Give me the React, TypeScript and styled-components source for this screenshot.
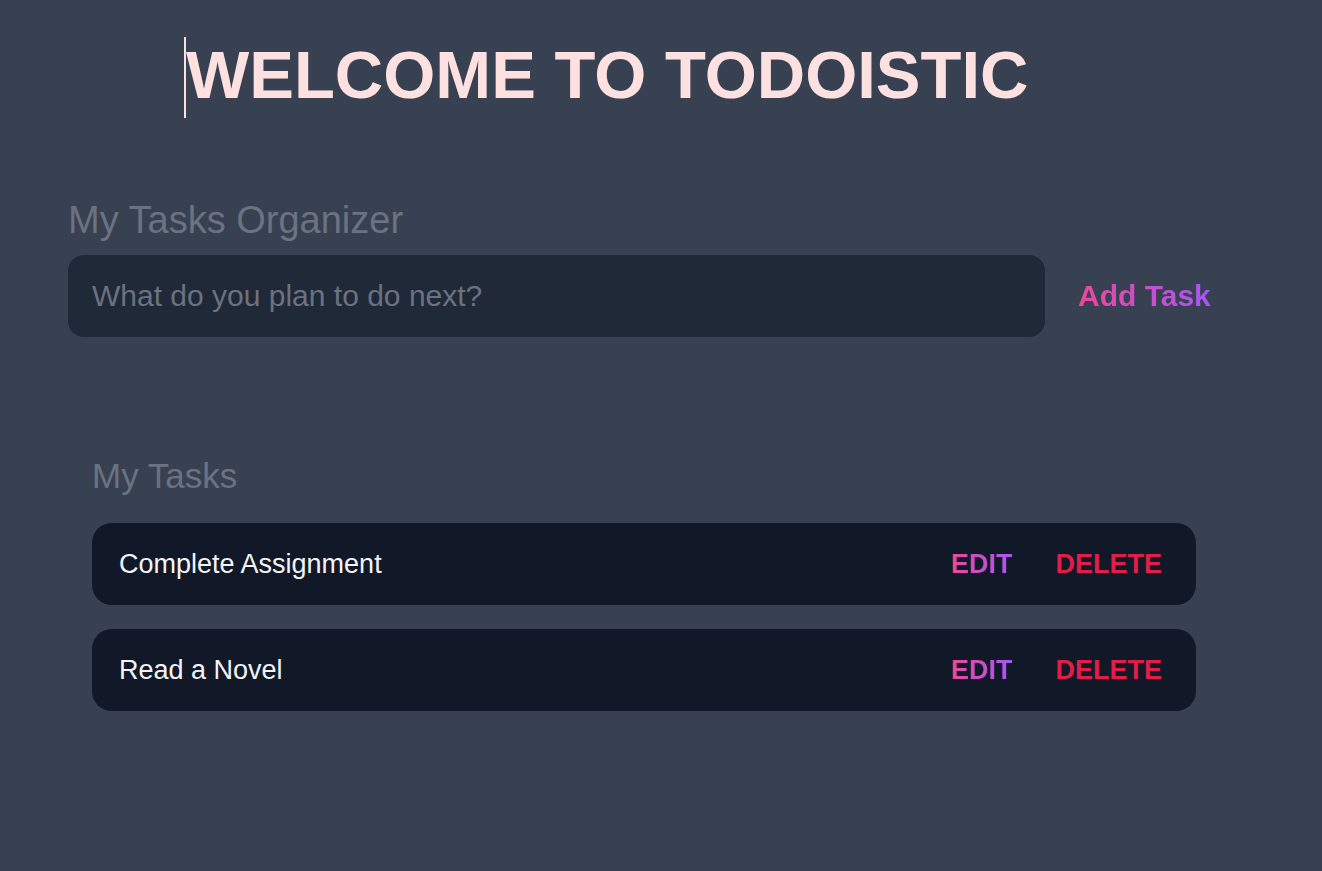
import React, { useState } from 'react'
import styled, { createGlobalStyle } from 'styled-components'

const GlobalStyle = createGlobalStyle`
  html, body {
    margin: 0;
    padding: 0;
    background: #374151;
    font-family: "Liberation Sans", Arial, sans-serif;
  }
`

const Page = styled.div`
  min-height: 100vh;
  background: #374151;
  display: flex;
  flex-direction: column;
`

const Header = styled.header`
  padding: 37px 0 0 184px;
  display: flex;
`

const Title = styled.h1`
  margin: 0;
  height: 81px;
  box-sizing: border-box;
  padding-bottom: 6px;
  display: flex;
  align-items: center;
  border-left: 2px solid #fde1e1;
  font-size: 67px;
  font-weight: 700;
  color: #fde1e1;
  white-space: nowrap;
`

const Organizer = styled.section`
  padding: 82px 0 0 68px;
`

const SectionTitle = styled.h2<{ $size: number }>`
  margin: 0;
  font-size: ${(p) => p.$size}px;
  line-height: 40px;
  font-weight: 400;
  color: #6b7280;
`

const Form = styled.form`
  margin-top: 15px;
  display: flex;
  align-items: center;
  gap: 33px;
`

const TaskInput = styled.input`
  width: 977px;
  height: 82px;
  box-sizing: border-box;
  padding: 0 24px;
  border: none;
  border-radius: 16px;
  background: #1f2937;
  color: #e5e7eb;
  font-family: inherit;
  font-size: 30px;
  outline: none;

  &::placeholder {
    color: #6b7280;
  }
`

const GradientText = styled.button<{ $size: number }>`
  border: none;
  padding: 0;
  background: linear-gradient(to right, #ec4899, #a855f7);
  -webkit-background-clip: text;
  background-clip: text;
  color: transparent;
  font-family: inherit;
  font-weight: 700;
  font-size: ${(p) => p.$size}px;
  cursor: pointer;
`

const TaskSection = styled.section`
  padding: 119px 0 0 92px;
`

const TaskList = styled.ul`
  list-style: none;
  margin: 27px 0 0;
  padding: 0;
  width: 1104px;
  display: flex;
  flex-direction: column;
  gap: 24px;
`

const TaskRow = styled.li`
  height: 82px;
  box-sizing: border-box;
  padding: 0 34px 0 27px;
  border-radius: 20px;
  background: #111827;
  display: flex;
  align-items: center;
`

const TaskName = styled.span`
  flex: 1;
  font-size: 27px;
  color: #f3f4f6;
`

const Actions = styled.div`
  display: flex;
  align-items: center;
  gap: 43px;
`

const DeleteButton = styled.button`
  border: none;
  padding: 0;
  background: none;
  color: #e11d48;
  font-family: inherit;
  font-weight: 700;
  font-size: 27px;
  cursor: pointer;
`

export default function App() {
  const [tasks, setTasks] = useState(['Complete Assignment', 'Read a Novel'])
  const [text, setText] = useState('')

  const addTask = (e: React.FormEvent) => {
    e.preventDefault()
    if (!text.trim()) return
    setTasks([...tasks, text.trim()])
    setText('')
  }

  return (
    <Page>
      <GlobalStyle />
      <Header>
        <Title>WELCOME TO TODOISTIC</Title>
      </Header>
      <Organizer>
        <SectionTitle $size={38}>My Tasks Organizer</SectionTitle>
        <Form onSubmit={addTask}>
          <TaskInput
            placeholder="What do you plan to do next?"
            value={text}
            onChange={(e) => setText(e.target.value)}
          />
          <GradientText $size={30} type="submit">
            Add Task
          </GradientText>
        </Form>
      </Organizer>
      <TaskSection>
        <SectionTitle $size={35}>My Tasks</SectionTitle>
        <TaskList>
          {tasks.map((t, i) => (
            <TaskRow key={i}>
              <TaskName>{t}</TaskName>
              <Actions>
                <GradientText $size={27} type="button">
                  EDIT
                </GradientText>
                <DeleteButton onClick={() => setTasks(tasks.filter((_, j) => j !== i))}>
                  DELETE
                </DeleteButton>
              </Actions>
            </TaskRow>
          ))}
        </TaskList>
      </TaskSection>
    </Page>
  )
}
